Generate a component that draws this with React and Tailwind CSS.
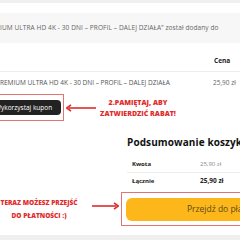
import React from "react";

function ArrowLeft() {
  return (
    <svg width="30" height="8" viewBox="0 0 30 8" className="shrink-0">
      <line x1="3" y1="4" x2="30" y2="4" stroke="#e02b2b" strokeWidth="1.6" />
      <path d="M5 0.8 L0.8 4 L5 7.2" fill="none" stroke="#e02b2b" strokeWidth="1.6" />
    </svg>
  );
}

function ArrowRight() {
  return (
    <svg width="27" height="8" viewBox="0 0 27 8" className="shrink-0">
      <line x1="0" y1="4" x2="24" y2="4" stroke="#e02b2b" strokeWidth="1.6" />
      <path d="M22 0.8 L26.2 4 L22 7.2" fill="none" stroke="#e02b2b" strokeWidth="1.6" />
    </svg>
  );
}

export default function App() {
  return (
    <div
      className="w-[240px] h-[240px] overflow-hidden bg-white flex flex-col"
      style={{ fontFamily: "'Open Sans', 'Liberation Sans', sans-serif" }}
    >
      <div className="h-[3px] bg-[#efefef] shrink-0" />
      <div className="h-[10px] shrink-0" />
      <div className="h-[30px] shrink-0 bg-[#f7f7f7] flex items-center">
        <span className="whitespace-nowrap text-[6.5px] text-[#666] tracking-[0.1px]">
          IUM ULTRA HD 4K - 30 DNI – PROFIL – DALEJ DZIAŁA” został dodany do
        </span>
      </div>

      <div className="h-[29px] shrink-0 flex items-end border-b border-[#eeeeee]">
        <div className="w-[214px] shrink-0" />
        <span className="text-[6.5px] font-bold text-[#222] pb-[5px]">Cena</span>
      </div>
      <div className="h-[22px] shrink-0 flex items-center">
        <span className="w-[213px] shrink-0 whitespace-nowrap text-[6.5px] text-[#555]">
          REMIUM ULTRA HD 4K - 30 DNI – PROFIL – DALEJ DZIAŁA
        </span>
        <span className="whitespace-nowrap text-[6.5px] text-[#666]">25,90 zł</span>
      </div>

      <div className="h-[27px] shrink-0 flex items-center">
        <div className="h-[27px] w-[64px] shrink-0 border border-l-0 border-[#e57373] flex items-center">
          <div className="h-[15px] w-[61px] shrink-0 bg-[#222222] rounded-r-[4px] flex items-center overflow-hidden">
            <span className="whitespace-nowrap text-[6.5px] text-white -ml-[5px]">Wykorzystaj kupon</span>
          </div>
        </div>
        <div className="ml-[2px]">
          <ArrowLeft />
        </div>
        <div className="w-[84px] shrink-0 flex flex-col items-center text-[7px] font-extrabold text-[#e02b2b] leading-[11px]">
          <span className="whitespace-nowrap">2.PAMIĘTAJ, ABY</span>
          <span className="whitespace-nowrap">ZATWIERDZIĆ RABAT!</span>
        </div>
      </div>

      <div className="flex shrink-0">
        <div className="w-[121px] shrink-0 flex flex-col">
          <div className="h-[75px]" />
          <div className="flex items-center">
            <div className="w-[90px] shrink-0 flex flex-col items-center text-[6.5px] font-extrabold text-[#e02b2b] leading-[13px] -ml-[6px]">
              <span className="whitespace-nowrap">TERAZ MOŻESZ PRZEJŚĆ</span>
              <span className="whitespace-nowrap">DO PŁATNOŚCI :)</span>
            </div>
            <div className="ml-[8px] -mt-[6px]">
              <ArrowRight />
            </div>
          </div>
        </div>
        <div className="w-[160px] shrink-0 flex flex-col">
          <div className="pl-[6px] pt-[14px] text-[10px] font-bold text-[#111] whitespace-nowrap leading-[14px] tracking-[0.1px]">
            Podsumowanie koszyka
          </div>
          <div className="ml-[6px] mt-[8px] h-[16px] flex items-center border-b border-[#eeeeee]">
            <span className="pl-[5px] w-[73px] text-[6px] font-bold text-[#222]">Kwota</span>
            <span className="text-[6px] text-[#888]">25,90 zł</span>
          </div>
          <div className="ml-[6px] h-[16px] flex items-center">
            <span className="pl-[5px] w-[73px] text-[6px] font-bold text-[#222]">Łącznie</span>
            <span className="text-[6.5px] font-bold text-[#222]">25,90 zł</span>
          </div>
          <div className="mt-[3px] h-[34px] border border-r-0 border-[#e57373] flex items-center pl-[4px]">
            <div className="h-[23px] w-[150px] bg-[#fdb71a] rounded-[6px] flex items-center pl-[61px]">
              <span className="whitespace-nowrap text-[8.5px] text-[#5b4a1a]">Przejdź do płatności</span>
            </div>
          </div>
        </div>
      </div>
      <div className="flex-1" />
      <div className="h-[5px] bg-[#efefef] shrink-0" />
    </div>
  );
}
